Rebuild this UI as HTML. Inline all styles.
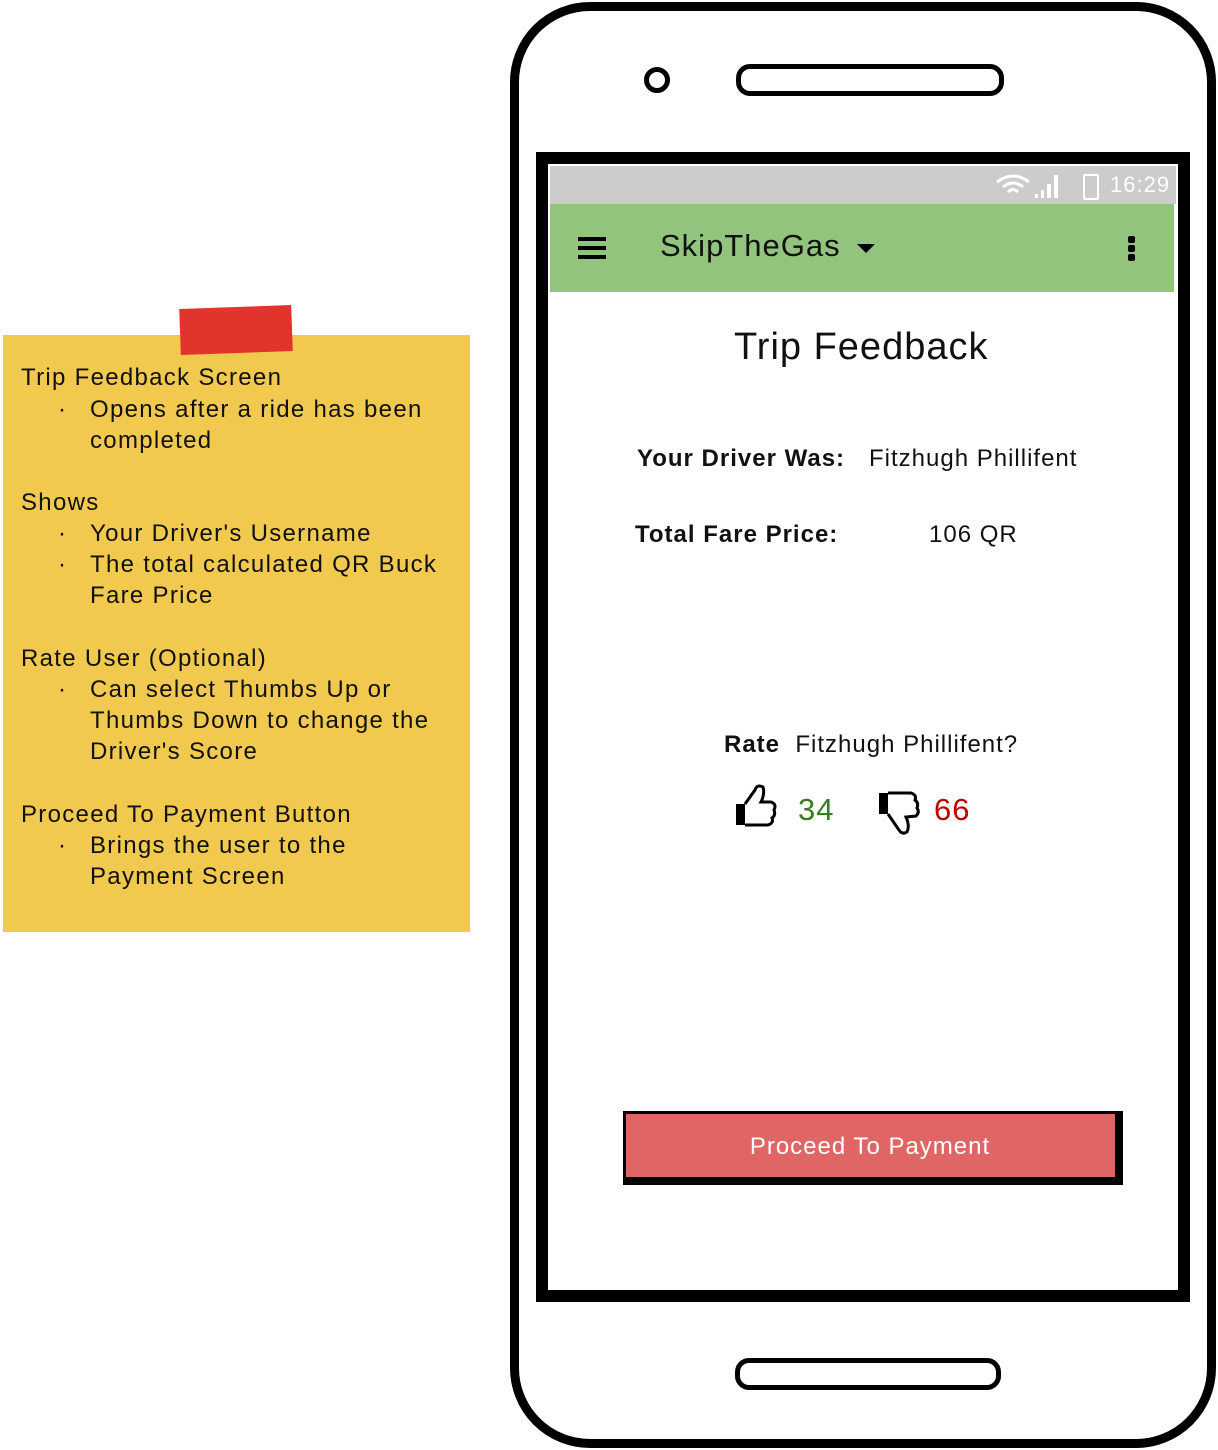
<!DOCTYPE html>
<html><head><meta charset="utf-8"><style>
body{margin:0;width:1218px;height:1450px;background:#fff;position:relative;overflow:hidden;font-family:"Liberation Sans",sans-serif;}
.abs{position:absolute}
.note{left:3px;top:335px;width:467px;height:597px;background:#f1c94f;}
.tape{left:180px;top:307px;width:112px;height:46px;background:#e0342c;transform:rotate(-2deg);}
.nt{position:absolute;font-size:24px;color:#111;line-height:31px;letter-spacing:1.3px;}
.phone{left:510px;top:2px;width:706px;height:1446px;border:9px solid #000;border-radius:80px;box-sizing:border-box;}
.screen{left:536px;top:152px;width:654px;height:1150px;border:12px solid #000;box-sizing:border-box;background:#fff;}
.t{position:absolute;color:#111;letter-spacing:1px;}
</style></head><body>
<div class="abs note"></div>
<div class="abs tape"></div>
<div class="nt" style="left:21px;top:362px">Trip Feedback Screen</div>
<div class="nt" style="left:58px;top:394px">·</div>
<div class="nt" style="left:90px;top:394px">Opens after a ride has been<br>completed</div>
<div class="nt" style="left:21px;top:487px">Shows</div>
<div class="nt" style="left:58px;top:518px">·<br>·</div>
<div class="nt" style="left:90px;top:518px">Your Driver's Username<br>The total calculated QR Buck<br>Fare Price</div>
<div class="nt" style="left:21px;top:643px">Rate User (Optional)</div>
<div class="nt" style="left:58px;top:674px">·</div>
<div class="nt" style="left:90px;top:674px">Can select Thumbs Up or<br>Thumbs Down to change the<br>Driver's Score</div>
<div class="nt" style="left:21px;top:799px">Proceed To Payment Button</div>
<div class="nt" style="left:58px;top:830px">·</div>
<div class="nt" style="left:90px;top:830px">Brings the user to the<br>Payment Screen</div>

<div class="abs phone"></div>
<div class="abs" style="left:644px;top:67px;width:16px;height:16px;border:5px solid #000;border-radius:50%"></div>
<div class="abs" style="left:736px;top:64px;width:258px;height:22px;border:5px solid #000;border-radius:14px"></div>
<div class="abs" style="left:735px;top:1358px;width:256px;height:22px;border:5px solid #000;border-radius:14px"></div>
<div class="abs screen"></div>
<div class="abs" style="left:550px;top:166px;width:626px;height:38px;background:#cccccc"></div>
<div class="t" style="left:1110px;top:172px;font-size:22px;color:#fff">16:29</div>
<svg class="abs" style="left:995px;top:172px" width="80" height="30"><path d="M2 10 Q18 -2 34 10 M8 15 Q18 7 28 15 M13 20 Q18 15 23 20" stroke="#fff" stroke-width="3" fill="none"/><rect x="40" y="22" width="3" height="4" fill="#fff"/><rect x="46" y="18" width="3" height="8" fill="#fff"/><rect x="52" y="12" width="4" height="14" fill="#fff"/><rect x="59" y="3" width="4" height="23" fill="#fff"/></svg>
<div class="abs" style="left:1083px;top:174px;width:12px;height:22px;border:2px solid #fff;border-radius:2px"></div>
<div class="abs" style="left:550px;top:204px;width:624px;height:88px;background:#92c47d"></div>
<div class="abs" style="left:578px;top:237px;width:28px;height:4px;background:#000;box-shadow:0 9px 0 #000,0 18px 0 #000"></div>
<div class="t" style="left:660px;top:228px;font-size:31px">SkipTheGas</div>
<div class="abs" style="left:857px;top:244px;border-left:9px solid transparent;border-right:9px solid transparent;border-top:9px solid #000"></div>
<div class="abs" style="left:1128px;top:236px;width:7px;height:7px;background:#000;border-radius:2px;box-shadow:0 9px 0 #000,0 18px 0 #000"></div>
<div class="t" style="left:734px;top:326px;font-size:38px">Trip Feedback</div>
<div class="t" style="left:637px;top:445px;font-size:24px;font-weight:bold">Your Driver Was:</div>
<div class="t" style="left:869px;top:445px;font-size:24px">Fitzhugh Phillifent</div>
<div class="t" style="left:635px;top:521px;font-size:24px;font-weight:bold">Total Fare Price:</div>
<div class="t" style="left:929px;top:521px;font-size:24px">106 QR</div>
<div class="t" style="left:724px;top:731px;font-size:24px"><b>Rate</b>&nbsp; Fitzhugh Phillifent?</div>
<svg class="abs" style="left:733px;top:782px" width="45" height="48"><path d="M3 22 h9 v21 h-9 z" fill="#000"/><path d="M12 22 L22 8 Q24 2 30 5 Q32 12 28 20 L38 20 Q44 22 41 28 Q43 33 39 36 Q41 41 35 43 L12 43" stroke="#000" stroke-width="3" fill="none"/></svg>
<div class="t" style="left:798px;top:792px;font-size:31px;color:#3a7d1e">34</div>
<svg class="abs" style="left:876px;top:790px" width="45" height="48"><path d="M3 3 h9 v21 h-9 z" fill="#000"/><path d="M12 3 L35 3 Q41 5 39 10 Q43 13 41 18 Q44 22 40 26 L30 27 Q34 36 31 42 Q26 45 23 40 L12 24" stroke="#000" stroke-width="3" fill="none"/></svg>
<div class="t" style="left:934px;top:792px;font-size:31px;color:#c00000">66</div>
<div class="abs" style="left:623px;top:1111px;width:500px;height:74px;background:#e06666;border:3px solid #000;border-right-width:8px;border-bottom-width:8px;box-sizing:border-box"></div>
<div class="t" style="left:623px;top:1133px;width:494px;text-align:center;font-size:24px;color:#fff">Proceed To Payment</div>
</body></html>
